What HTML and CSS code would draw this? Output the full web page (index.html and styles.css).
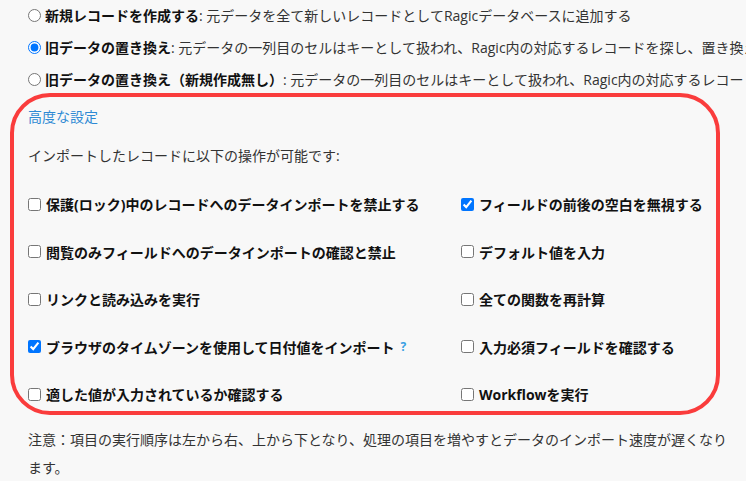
FILE: index.html
```html
<!DOCTYPE html>
<html lang="ja">
<head>
    <meta charset="UTF-8">
    <meta name="viewport" content="width=device-width, initial-scale=1.0">
    <title>インポート設定</title>
    <link rel="stylesheet" href="styles.css">
</head>
<body>
    <div class="import-options">
        <div class="mode-list">
            <label class="mode"><input type="radio" name="mode"><b>新規レコードを作成する</b>: 元データを全て新しいレコードとしてRagicデータベースに追加する</label>
            <label class="mode"><input type="radio" name="mode" checked><b>旧データの置き換え</b>: 元データの一列目のセルはキーとして扱われ、Ragic内の対応するレコードを探し、置き換えます。</label>
            <label class="mode"><input type="radio" name="mode"><b>旧データの置き換え（新規作成無し）</b>: 元データの一列目のセルはキーとして扱われ、Ragic内の対応するレコードを探し、置き換えます。</label>
        </div>

        <div class="advanced-box">
            <a class="advanced-link" href="#">高度な設定</a>
            <p class="advanced-intro">インポートしたレコードに以下の操作が可能です:</p>
            <div class="option-grid">
                <label class="option"><input type="checkbox">保護(ロック)中のレコードへのデータインポートを禁止する</label>
                <label class="option"><input type="checkbox" checked>フィールドの前後の空白を無視する</label>
                <label class="option"><input type="checkbox">閲覧のみフィールドへのデータインポートの確認と禁止</label>
                <label class="option"><input type="checkbox">デフォルト値を入力</label>
                <label class="option"><input type="checkbox">リンクと読み込みを実行</label>
                <label class="option"><input type="checkbox">全ての関数を再計算</label>
                <label class="option"><input type="checkbox" checked>ブラウザのタイムゾーンを使用して日付値をインポート<span class="help">?</span></label>
                <label class="option"><input type="checkbox">入力必須フィールドを確認する</label>
                <label class="option"><input type="checkbox">適した値が入力されているか確認する</label>
                <label class="option"><input type="checkbox">Workflowを実行</label>
            </div>
        </div>

        <p class="note">注意：項目の実行順序は左から右、上から下となり、処理の項目を増やすとデータのインポート速度が遅くなります。</p>
    </div>
</body>
</html>
```

FILE: styles.css
```css
/* Página de opções de importação */
* {
    box-sizing: border-box;
}
body {
    margin: 0;
    background: #f8f8f8;
    color: #222;
    font-family: "Open Sans", "Noto Sans CJK JP", sans-serif;
    font-size: 14px;
    overflow: hidden;
}
.import-options {
    padding: 0 8px 0 10px;
}
.mode-list {
    margin: -1px 0 -2px;
    padding-left: 18px;
}
.mode {
    display: flex;
    align-items: center;
    height: 32px;
    white-space: nowrap; /* o texto passa da borda, como no original */
    color: #333;
}
.mode b {
    color: #111;
}
.mode input {
    width: 13px;
    height: 13px;
    margin: 0 4px 0 0;
    flex-shrink: 0;
}

/* Caixa de configurações avançadas */
.advanced-box {
    width: 710px;
    border: 4px solid #fa3c3c;
    border-radius: 40px;
    padding: 6px 14px 3px;
}
.advanced-link {
    display: block;
    line-height: 28px;
    color: #2e8ad4;
    text-decoration: none;
}
.advanced-intro {
    margin: 11px 0 0;
    line-height: 28px;
    color: #333;
}
.option-grid {
    display: grid;
    grid-template-columns: 433px 1fr;
    row-gap: 19.5px;
    margin-top: 20px;
}
.option {
    display: flex;
    align-items: center;
    height: 28px;
    font-weight: bold;
    color: #111;
    white-space: nowrap;
}
.option input {
    width: 13px;
    height: 13px;
    margin: 0 5px 0 0;
    flex-shrink: 0;
}
.help {
    margin-left: 6px;
    font-size: 12px;
    color: #3a9fe3;
}
.note {
    margin: 11px 0 0;
    padding-left: 18px;
    line-height: 28px;
    color: #333;
}
```
